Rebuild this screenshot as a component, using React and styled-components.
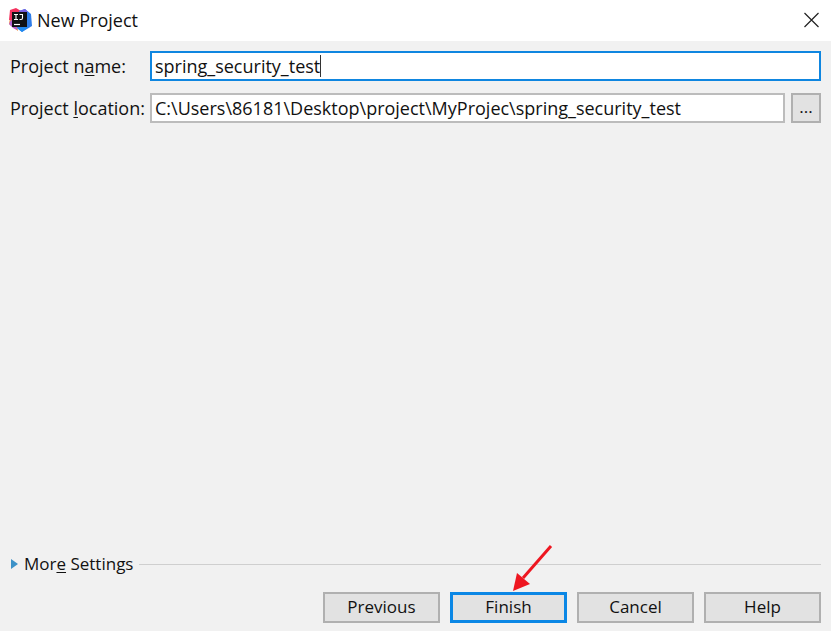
// src/App.jsx
import React, { useState } from 'react';
import styled, { createGlobalStyle } from 'styled-components';

const GlobalStyle = createGlobalStyle`
  * {
    box-sizing: border-box;
  }

  body {
    margin: 0;
    background: #f1f1f1;
    color: #111;
    font-family: 'Open Sans', 'Noto Sans', sans-serif;
    font-size: 18px;
    line-height: 24px;
  }

  button,
  input {
    font: inherit;
    color: inherit;
  }
`;

const Dialog = styled.div`
  display: flex;
  flex-direction: column;
  min-height: 100vh;
`;

const TitleBar = styled.header`
  display: flex;
  align-items: center;
  height: 41px;
  padding: 0 10px 2px 8px;
  background: #fff;
`;

const Title = styled.h1`
  flex: 1;
  margin: 0 0 0 5px;
  font-size: 18px;
  font-weight: 400;
`;

const CloseButton = styled.button`
  display: flex;
  padding: 0;
  border: none;
  background: none;
`;

const Form = styled.main`
  display: grid;
  grid-template-columns: 140px 1fr;
  row-gap: 12px;
  align-content: start;
  align-items: center;
  flex: 1;
  padding: 10px 10px 0;
`;

const Label = styled.label`
  white-space: nowrap;
`;

const Mnemonic = styled.span`
  text-decoration: underline;
  text-decoration-thickness: 1px;
  text-underline-offset: 2px;
`;

const FieldRow = styled.div`
  display: flex;
  gap: 6px;
`;

const Field = styled.div`
  display: flex;
  align-items: center;
  flex: 1;
  height: 30px;
  padding: 0 3px;
  border: 2px solid ${({ $active }) => ($active ? '#0f86e0' : '#bcbcbc')};
  background: #fff;
`;

const TextInput = styled.input`
  ${({ $fit }) => ($fit ? 'field-sizing: content;' : 'flex: 1;')}
  min-width: 0;
  height: 24px;
  padding: 0;
  border: none;
  outline: none;
  background: none;
`;

const Caret = styled.span`
  width: 1px;
  height: 22px;
  background: #333;
`;

const Button = styled.button`
  width: ${({ $small }) => ($small ? '30px' : '117px')};
  height: ${({ $small }) => ($small ? '30px' : '31px')};
  padding: 0 0 2px;
  border: ${({ $primary }) => ($primary ? '3px solid #0b87e5' : '2px solid #b0b0b0')};
  background: #e2e2e2;
  font-size: 17px;
  line-height: 22px;
`;

const MoreSettings = styled.button`
  display: flex;
  align-items: center;
  margin: 0 10px;
  padding: 0;
  border: none;
  background: none;
  font-size: 17px;

  &::after {
    content: '';
    flex: 1;
    height: 1px;
    margin-left: 6px;
    background: #cfcfcf;
  }
`;

const Triangle = styled.svg`
  margin-right: 6px;
`;

const Footer = styled.footer`
  display: flex;
  justify-content: flex-end;
  gap: 10px;
  padding: 16px 10px 8px;
`;

const Pointed = styled.div`
  position: relative;
`;

const Arrow = styled.svg`
  position: absolute;
  left: 61px;
  bottom: 100%;
  pointer-events: none;
`;

const Logo = () => (
  <svg width="24" height="24" viewBox="0 0 24 24" aria-hidden="true">
    <path d="M1 16 L2 10 L8 10 L10 23 L6 20 Z" fill="#f58b3c" />
    <path d="M1 16 L3 12 L8 15 L9 22 L5 20 Z" fill="#b65fd0" />
    <path d="M2 2 L8 0 L13 3 L12 12 L1 12 Z" fill="#f5325f" />
    <path d="M11 3 L17 1 L23 6 L24 18 L14 24 L9 20 Z" fill="#2f7de8" />
    <path d="M11 3 L17 1 L20 4 L12 7 Z" fill="#7b5fe0" />
    <path d="M9 20 L20 19 L14 24 Z" fill="#1e8bf0" />
    <rect x="4" y="4" width="15" height="15" fill="#101014" />
    <path
      d="M6 6.5h4M8 6.5v5M6 11.5h4M11.5 6.5h3.5M14.5 6.5v3.4q0 1.6-1.5 1.6h-1.5"
      fill="none"
      stroke="#fff"
      strokeWidth="1.1"
    />
    <path d="M6 16.5h6" stroke="#fff" strokeWidth="1.2" />
  </svg>
);

const App = () => {
  const [name, setName] = useState('spring_security_test');
  const [location, setLocation] = useState(
    'C:\\Users\\86181\\Desktop\\project\\MyProjec\\spring_security_test'
  );

  return (
    <>
      <GlobalStyle />
      <Dialog>
        <TitleBar>
          <Logo />
          <Title>New Project</Title>
          <CloseButton aria-label="Close">
            <svg width="18" height="18" viewBox="0 0 18 18" aria-hidden="true">
              <path d="M1.5 2L15.5 16M15.5 2L1.5 16" stroke="#222" strokeWidth="1.2" />
            </svg>
          </CloseButton>
        </TitleBar>

        <Form>
          <Label htmlFor="project-name">
            Project n<Mnemonic>a</Mnemonic>me:
          </Label>
          <Field $active>
            <TextInput
              id="project-name"
              $fit
              spellCheck={false}
              value={name}
              onChange={(e) => setName(e.target.value)}
            />
            <Caret />
          </Field>

          <Label htmlFor="project-location">
            Project <Mnemonic>l</Mnemonic>ocation:
          </Label>
          <FieldRow>
            <Field>
              <TextInput
                id="project-location"
                spellCheck={false}
                value={location}
                onChange={(e) => setLocation(e.target.value)}
              />
            </Field>
            <Button $small aria-label="Browse">...</Button>
          </FieldRow>
        </Form>

        <MoreSettings>
          <Triangle width="8" height="12" viewBox="0 0 8 12" aria-hidden="true">
            <path d="M1 1L8 6L1 11Z" fill="#3d92c8" />
          </Triangle>
          <span>
            Mor<Mnemonic>e</Mnemonic> Settings
          </span>
        </MoreSettings>

        <Footer>
          <Button>Previous</Button>
          <Pointed>
            <Button $primary>Finish</Button>
            <Arrow width="42" height="48" viewBox="0 0 42 48" aria-hidden="true">
              <path d="M40 2L12 34" stroke="#ee1620" strokeWidth="3" />
              <path d="M2 47L6 29L19 40Z" fill="#ee1620" />
            </Arrow>
          </Pointed>
          <Button>Cancel</Button>
          <Button>Help</Button>
        </Footer>
      </Dialog>
    </>
  );
};

export default App;
